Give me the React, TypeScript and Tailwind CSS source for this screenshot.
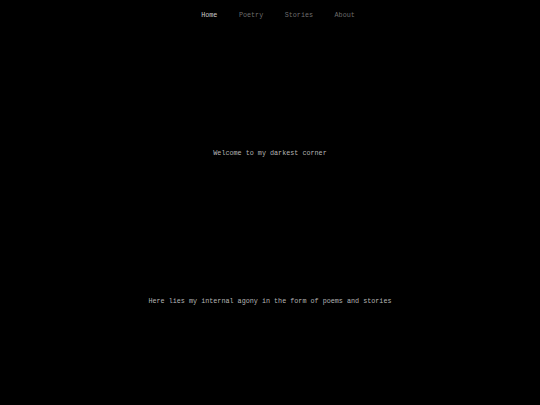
export default function App() {
  return (
    <div className="w-[540px] h-[405px] bg-black text-[6.75px] leading-[8px] overflow-hidden font-['Liberation_Mono','Courier_New',monospace] antialiased">
      <nav className="h-[30px] flex items-center justify-center gap-[21.5px] pl-[16px] opacity-[0.99]">
        <span className="text-[#cfcfcf]">Home</span>
        <span className="text-[#6f6f6f]">Poetry</span>
        <span className="text-[#6f6f6f]">Stories</span>
        <span className="text-[#6f6f6f]">About</span>
      </nav>
      <div className="flex flex-col items-center text-[#b8b8b8] opacity-[0.99]">
        <p className="mt-[119px]">Welcome to my darkest corner</p>
        <p className="mt-[140px]">Here lies my internal agony in the form of poems and stories</p>
      </div>
    </div>
  );
}
